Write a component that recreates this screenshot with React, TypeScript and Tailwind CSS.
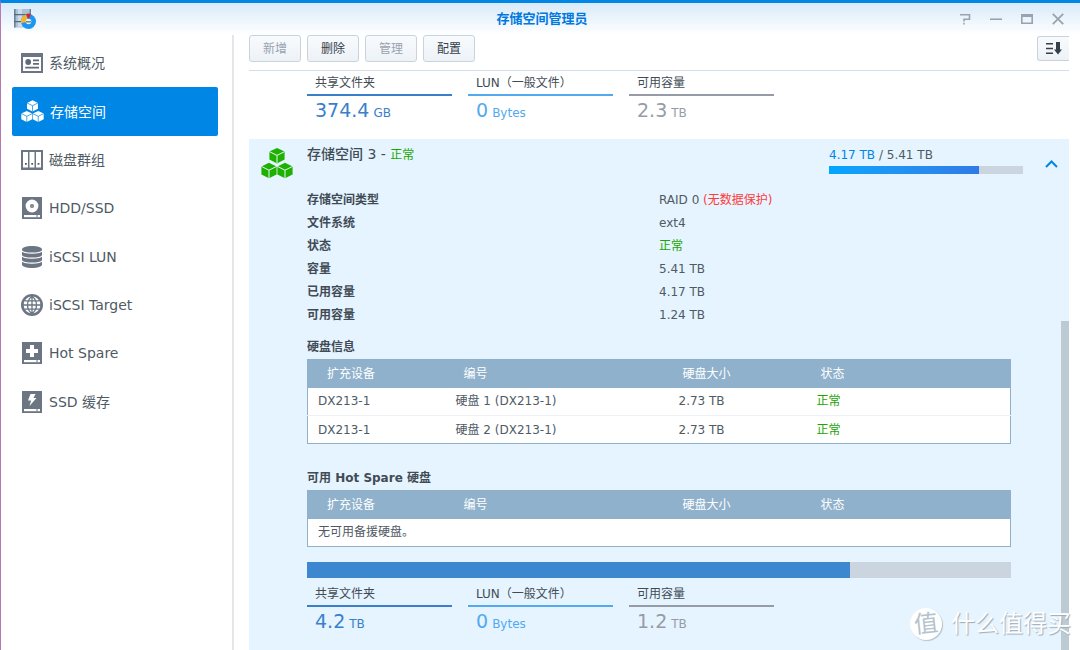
import React from 'react';
import clsx from 'clsx';

type IconProps = { className?: string };

const Cube = ({ x, y, line }: { x: number; y: number; line: string }) => (
  <g transform={`translate(${x} ${y})`}>
    <path d="M8 0 L15.6 3.6 V11.6 L8 15.4 L0.4 11.6 V3.6 Z" fill="currentColor" />
    <path d="M0.4 3.6 L8 7.4 L15.6 3.6 M8 7.4 V15.4" fill="none" stroke={line} strokeWidth="1" />
  </g>
);

const CubesIcon = ({ className, line = '#e5f4ff' }: IconProps & { line?: string }) => (
  <svg viewBox="0 0 32 31" className={className} aria-hidden="true">
    <Cube x={8} y={0} line={line} />
    <Cube x={0} y={14.8} line={line} />
    <Cube x={16} y={14.8} line={line} />
  </svg>
);

const OverviewIcon = ({ className }: IconProps) => (
  <svg viewBox="0 0 22 22" className={className} aria-hidden="true">
    <path d="M0 1h22v20H0z" fill="#6b7682" />
    <path d="M2 5h18v14H2z" fill="#fff" />
    <circle cx="7.2" cy="10" r="2.9" fill="#5f6b77" />
    <path d="M12 7.5h6v1.8h-6zM12 11h6v1.8h-6zM4.2 14.8h13.8v1.8H4.2z" fill="#5f6b77" />
  </svg>
);

const DiskGroupIcon = ({ className }: IconProps) => (
  <svg viewBox="0 0 22 22" className={className} aria-hidden="true">
    <path d="M0 1h22v20H0z" fill="#6b7682" />
    <path d="M2 3h5v15.5H2zM8.5 3h5v15.5h-5zM15 3h5v15.5h-5z" fill="#fff" />
    <path d="M4 14h1.8v1.8H4zM10.3 14h1.8v1.8h-1.8zM16.6 14h1.8v1.8h-1.8z" fill="#4f5b68" />
  </svg>
);

const DriveBase = () => (
  <>
    <path d="M1 0h20v22H1z" fill="#6b7682" />
    <path d="M3 18h16v2.2H3z" fill="#fff" />
    <path d="M15 18.4h2v1.2h-2z" fill="#6b7682" />
  </>
);

const HddIcon = ({ className }: IconProps) => (
  <svg viewBox="0 0 22 22" className={className} aria-hidden="true">
    <DriveBase />
    <circle cx="11" cy="9" r="6.4" fill="#fff" />
    <circle cx="11" cy="9" r="2" fill="#6b7682" />
    <circle cx="11" cy="9" r="0.6" fill="#fff" />
  </svg>
);

const SpareIcon = ({ className }: IconProps) => (
  <svg viewBox="0 0 22 22" className={className} aria-hidden="true">
    <DriveBase />
    <path d="M9 3h4v4h4v4h-4v4H9v-4H5V7h4z" fill="#fff" />
  </svg>
);

const CacheIcon = ({ className }: IconProps) => (
  <svg viewBox="0 0 22 22" className={className} aria-hidden="true">
    <DriveBase />
    <path d="M9.5 3h5l-2 4h3L8.5 15l1.6-5.4H7z" fill="#fff" />
  </svg>
);

const LunIcon = ({ className }: IconProps) => (
  <svg viewBox="0 0 22 22" className={className} aria-hidden="true">
    <path d="M1 3.5v15C1 20.6 5.5 22 11 22s10-1.4 10-3.5v-15C21 1.4 16.5 0 11 0S1 1.4 1 3.5z" fill="#6b7682" />
    <path
      d="M1 4.8C2.8 8 19.2 8 21 4.8M1 9.8c1.8 3.2 18.2 3.2 20 0M1 14.8c1.8 3.2 18.2 3.2 20 0"
      fill="none"
      stroke="#fff"
      strokeWidth="1.2"
    />
  </svg>
);

const TargetIcon = ({ className }: IconProps) => (
  <svg viewBox="0 0 22 22" className={className} aria-hidden="true">
    <circle cx="11" cy="11" r="11" fill="#6b7682" />
    <circle cx="11" cy="11" r="8.4" fill="#fff" />
    <path
      d="M11 2v18M2 11h18M3.5 6.8h15M3.5 15.2h15M11 2.2C5 7 5 15 11 19.8M11 2.2c6 4.8 6 12.8 0 17.6"
      fill="none"
      stroke="#6b7682"
      strokeWidth="1.3"
    />
  </svg>
);

const AppLogo = ({ className }: IconProps) => (
  <svg viewBox="0 0 24 22" className={className} aria-hidden="true">
    <path d="M1 1h17v18.5H1z" fill="#a9c2d8" />
    <path d="M1 1h1.6v18.5H1zM16.6 1H18v8h-1.4z" fill="#6d8296" />
    <path d="M5 1h4v18.5H5z" fill="#c9dbea" />
    <path d="M1 6h17v1.2H1zM1 13h8v1.2H1z" fill="#566a7c" />
    <circle cx="15.5" cy="13.5" r="7.5" fill="#1c97f0" />
    <path d="M15.5 13.5 8 15.2A7.5 7.5 0 0 1 13 6.4z" fill="#f7b32b" />
    <path d="M15.5 11.5 13.2 6A7.5 7.5 0 0 1 18 6z" fill="#e0202c" />
    <circle cx="15.5" cy="13.5" r="2.8" fill="#e4eef6" />
    <path d="M13 13.8h5" stroke="#56697a" strokeWidth="1.2" />
  </svg>
);

const navItems = [
  { label: '系统概况', Icon: OverviewIcon },
  { label: '存储空间', Icon: CubesIcon, active: true },
  { label: '磁盘群组', Icon: DiskGroupIcon },
  { label: 'HDD/SSD', Icon: HddIcon },
  { label: 'iSCSI LUN', Icon: LunIcon },
  { label: 'iSCSI Target', Icon: TargetIcon },
  { label: 'Hot Spare', Icon: SpareIcon },
  { label: 'SSD 缓存', Icon: CacheIcon },
];

const toolbar = [
  { label: '新增', disabled: true },
  { label: '删除' },
  { label: '管理', disabled: true },
  { label: '配置' },
];

const details: { label: string; value: React.ReactNode }[] = [
  { label: '存储空间类型', value: <>RAID 0 <span className="text-[#ff3b3b]">(无数据保护)</span></> },
  { label: '文件系统', value: 'ext4' },
  { label: '状态', value: <span className="text-[#1ba600]">正常</span> },
  { label: '容量', value: '5.41 TB' },
  { label: '已用容量', value: '4.17 TB' },
  { label: '可用容量', value: '1.24 TB' },
];

const disks = [
  { device: 'DX213-1', name: '硬盘 1 (DX213-1)', size: '2.73 TB', status: '正常' },
  { device: 'DX213-1', name: '硬盘 2 (DX213-1)', size: '2.73 TB', status: '正常' },
];

const TitleBar = () => (
  <header className="flex h-8 shrink-0 items-center bg-linear-to-b from-[#d8eaf9] to-white pr-4 pl-3">
    <AppLogo className="h-[22px] w-6" />
    <h1 className="flex-1 pl-[88px] text-center text-[13px] font-bold text-[#0078e0]">存储空间管理员</h1>
    <div className="flex items-center gap-[19px] text-[#98a3af]">
      <button type="button" aria-label="帮助">
        <svg viewBox="0 0 12 12" className="size-3" fill="none" stroke="currentColor" strokeWidth="1.6">
          <path d="M1 1.8h9.5v4.4H5v2.3M5 9.8v1.8" />
        </svg>
      </button>
      <button type="button" aria-label="最小化">
        <svg viewBox="0 0 12 12" className="size-3" fill="none" stroke="currentColor" strokeWidth="1.6">
          <path d="M0 6.2h12" />
        </svg>
      </button>
      <button type="button" aria-label="最大化">
        <svg viewBox="0 0 12 12" className="size-3" fill="none" stroke="currentColor" strokeWidth="1.6">
          <path d="M0.8 1.8h10.4v8.4H0.8zM0.8 3.2h10.4" />
        </svg>
      </button>
      <button type="button" aria-label="关闭">
        <svg viewBox="0 0 12 12" className="size-3" fill="none" stroke="currentColor" strokeWidth="1.8">
          <path d="M0.8 0.8l10.4 10.4M11.2 0.8L0.8 11.2" />
        </svg>
      </button>
    </div>
  </header>
);

const Sidebar = () => (
  <nav className="w-[233px] shrink-0 border-r-2 border-[#e4e6e9] pt-1 pr-[14px] pl-[11px]">
    <ul className="grid h-[387px] grid-rows-8">
      {navItems.map(({ label, Icon, active }) => (
        <li key={label}>
          <a
            href="#"
            className={clsx(
              'flex h-full items-center gap-[6px] rounded-xs pl-[9px] text-sm',
              active ? 'bg-[#0086e5] text-white' : 'text-[#505a64]'
            )}
          >
            {active ? <CubesIcon className="size-[23px]" line="#0086e5" /> : <Icon className="size-[22px]" />}
            {label}
          </a>
        </li>
      ))}
    </ul>
  </nav>
);

const Stat = ({ label, value, unit, tone }: { label: string; value: string; unit: string; tone: string }) => (
  <div className={clsx('w-[145px]', tone)}>
    <div className="border-b-2 border-inherit pt-0.5 pl-2 text-xs leading-[21px]">
      <span className="text-[#414b55]">{label}</span>
    </div>
    <div className="pl-2 text-[19px] leading-7">
      {value} <span className="-ml-0.5 text-xs">{unit}</span>
    </div>
  </div>
);

const Stats = ({ shared, sharedUnit, free }: { shared: string; sharedUnit: string; free: string }) => (
  <div className="flex gap-4">
    <Stat label="共享文件夹" value={shared} unit={sharedUnit} tone="border-[#3a7fcc] text-[#3a7fcc]" />
    <Stat label="LUN（一般文件）" value="0" unit="Bytes" tone="border-[#52a9f0] text-[#52a9f0]" />
    <Stat label="可用容量" value={free} unit="TB" tone="border-[#959ca8] text-[#959ca8]" />
  </div>
);

const DiskTable = ({ title, children }: { title: string; children: React.ReactNode }) => (
  <section>
    <h3 className="text-xs leading-6 font-bold text-[#414b55]">{title}</h3>
    <table className="w-full table-fixed border border-[#8fb0ca] bg-white text-left text-xs text-[#505a64]">
      <thead className="bg-[#8fb1cb] text-white">
        <tr className="h-7">
          <th className="w-[138px] pl-[19px] font-normal">扩充设备</th>
          <th className="w-[223px] pl-[18px] font-normal">编号</th>
          <th className="w-[138px] pl-[14px] font-normal">硬盘大小</th>
          <th className="pl-[14px] font-normal">状态</th>
        </tr>
      </thead>
      <tbody className="divide-y divide-[#edf0f4]">{children}</tbody>
    </table>
  </section>
);

const VolumePanel = () => (
  <section className="min-h-0 flex-1 bg-[#e5f4ff]">
    <div className="flex h-[50px] items-start">
      <div className="w-[58px] shrink-0 pt-[9px] pl-3">
        <CubesIcon className="h-[31px] w-8 text-[#1fb100]" />
      </div>
      <h2 className="flex-1 pt-[3px] text-sm leading-6 font-medium text-[#414b55]">
        存储空间 3 <span className="font-normal">-</span>{' '}
        <span className="text-xs font-normal text-[#1ba600]">正常</span>
      </h2>
      <div className="w-[194px] pt-[7px] text-xs leading-[18px] text-[#505a64]">
        <span className="text-[#0086e5]">4.17 TB</span> / 5.41 TB
        <div className="mt-0.5 h-2 bg-[#cbd5e0]">
          <div className="h-full bg-linear-to-r from-[#00a6ff] to-[#2f7be6]" style={{ width: `${(4.17 / 5.41) * 100}%` }} />
        </div>
      </div>
      <button type="button" aria-label="收起" className="mt-5 mr-[11px] ml-[22px] text-[#0086e5]">
        <svg viewBox="0 0 13 10" className="h-[10px] w-[13px]" fill="none" stroke="currentColor" strokeWidth="2">
          <path d="M1 8l5.5-5.5L12 8" />
        </svg>
      </button>
    </div>

    <div className="px-[58px]">
      <dl className="grid grid-cols-2 text-xs leading-[23px] text-[#505a64]">
        {details.map(({ label, value }) => (
          <React.Fragment key={label}>
            <dt className="font-bold text-[#414b55]">{label}</dt>
            <dd>{value}</dd>
          </React.Fragment>
        ))}
      </dl>

      <div className="mt-2 flex flex-col gap-[22px]">
        <DiskTable title="硬盘信息">
          {disks.map((disk) => (
            <tr key={disk.name} className="h-7">
              <td className="pl-[10px]">{disk.device}</td>
              <td className="pl-[10px]">{disk.name}</td>
              <td className="pl-[10px]">{disk.size}</td>
              <td className="pl-[10px] text-[#1ba600]">{disk.status}</td>
            </tr>
          ))}
        </DiskTable>
        <DiskTable title="可用 Hot Spare 硬盘">
          <tr className="h-7">
            <td colSpan={4} className="pl-[10px]">无可用备援硬盘。</td>
          </tr>
        </DiskTable>
      </div>

      <div className="mt-[15px] mb-1 h-4 bg-[#cbd5e0]">
        <div className="h-full bg-[#3d86d0]" style={{ width: '77.2%' }} />
      </div>
      <Stats shared="4.2" sharedUnit="TB" free="1.2" />
    </div>
  </section>
);

const Watermark = () => (
  <div className="absolute right-[9px] bottom-[10px] flex items-center gap-[9px] text-2xl leading-8 text-white text-shadow-[1px_1px_1px_#9aabb9]">
    <span className="flex size-8 items-center justify-center rounded-full bg-white text-2xl text-[#b4c3ce] shadow-[1px_1px_1px_#b4c3ce] text-shadow-none">
      <span className="-rotate-6">值</span>
    </span>
    什么值得买
  </div>
);

export default function App() {
  return (
    <div className="relative flex h-screen flex-col overflow-hidden border-t-3 border-l border-t-[#0086e5] border-l-[#b878b4] bg-white font-['DejaVu_Sans','Noto_Sans_CJK_SC',sans-serif]">
      <TitleBar />
      <div className="flex min-h-0 flex-1">
        <Sidebar />
        <main className="flex min-w-0 flex-1 flex-col pr-[11px] pl-[15px]">
          <div className="flex h-9 shrink-0 items-start justify-between border-b border-[#d3deea]">
            <div className="flex gap-[6px]">
              {toolbar.map(({ label, disabled }) => (
                <button
                  key={label}
                  type="button"
                  disabled={disabled}
                  className="h-[27px] w-[52px] rounded-[3px] border border-[#c8d3df] bg-linear-to-b from-[#f8fbfd] to-[#edf2f7] text-xs text-[#35404b] disabled:text-[#98a3af]"
                >
                  {label}
                </button>
              ))}
            </div>
            <button
              type="button"
              aria-label="排序"
              className="mt-px flex h-[25px] w-8 items-center justify-center rounded-l-[3px] border border-r-0 border-[#c8d3df] bg-linear-to-b from-[#f8fbfd] to-[#edf2f7] text-[#35404b]"
            >
              <svg viewBox="0 0 16 13" className="h-[13px] w-4" fill="currentColor">
                <path d="M0 1h7v1.6H0zM0 5.7h7v1.6H0zM0 10.4h7V12H0zM10 0h4v7.5h2L12 12.5 8 7.5h2z" />
              </svg>
            </button>
          </div>

          <div className="relative flex min-h-0 flex-1 flex-col">
            <div className="h-[68px] shrink-0 px-[58px]">
              <Stats shared="374.4" sharedUnit="GB" free="2.3" />
            </div>
            <VolumePanel />
            <div className="absolute top-[250px] right-0 bottom-0 w-2 bg-[#bccad4]" />
          </div>
        </main>
      </div>
      <Watermark />
    </div>
  );
}
